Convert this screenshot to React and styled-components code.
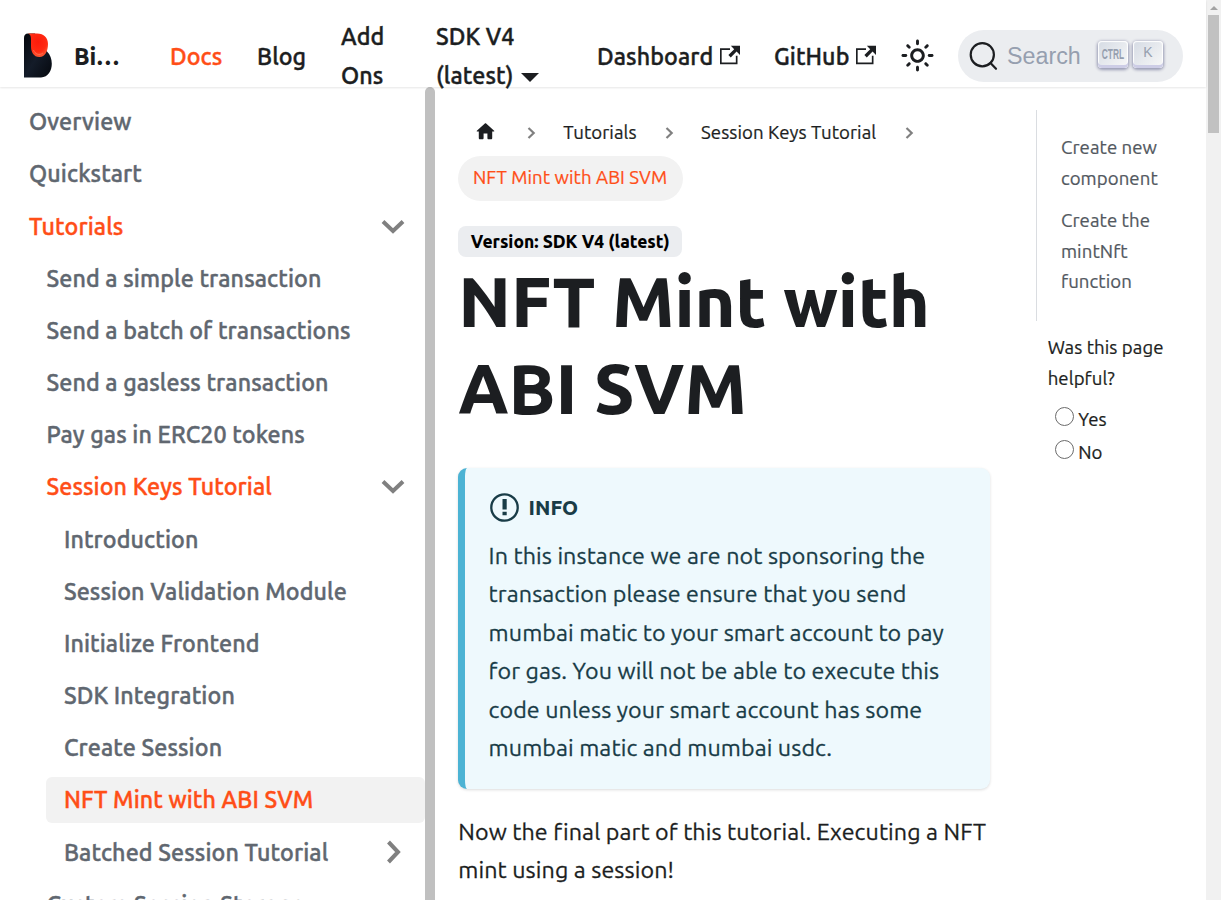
import React from 'react';
import styled, { createGlobalStyle } from 'styled-components';

const Global = createGlobalStyle`
  *, *::before, *::after { box-sizing: border-box; }
  body {
    margin: 0;
    background: #fff;
    color: #1c1e21;
    font-family: Ubuntu, "Noto Sans", "Open Sans", sans-serif;
    font-weight: 400;
    text-rendering: optimizeLegibility;
    overflow: hidden;
  }
`;

const Window = styled.div`
  display: flex;
  width: 1221px;
  height: 900px;
  overflow: hidden;
`;
const Page = styled.div`
  display: flex;
  flex-direction: column;
  width: 1206px;
`;
/* Ubuntu's regular and medium faces are thin: a hairline stroke gives them body. */
const Label = styled.span`
  white-space: nowrap;
  letter-spacing: ${(p) => (p.$bold ? '-0.001em' : '0.0038em')};
  -webkit-text-stroke: ${(p) => (p.$bold ? '0' : '0.012em')};
`;
const Line = styled(Label)`
  display: block;
`;

/* Navbar */
const Navbar = styled.header`
  display: flex;
  align-items: center;
  flex: none;
  height: 87px;
  padding: 25px 23px 0;
  position: relative;
  z-index: 2;
  box-shadow: 0 1px 2px rgba(0, 0, 0, 0.1);
  font-size: 23.27px;
  font-weight: 500;
  line-height: 39px;
`;
const Brand = styled.div`
  display: flex;
  align-items: center;
  gap: 21px;
  width: 147px;
  font-weight: 800;
`;
const NavLink = styled.a`
  display: flex;
  align-items: center;
  flex: none;
  gap: 6.6px;
  width: ${(p) => p.$w}px;
  color: ${(p) => (p.$active ? '#ff4e17' : '#1c1e21')};
`;
const NavLabel = styled(Label)`
  -webkit-text-stroke-width: 0.018em;
`;
const Caret = styled.i`
  display: inline-block;
  margin-left: 7.5px;
  border: 9px solid transparent;
  border-top: 9px solid #1c1e21;
  border-bottom: 0;
  vertical-align: 2px;
`;
const ThemeButton = styled.div`
  display: flex;
  width: 58px;
  margin-top: -2px;
`;
const Search = styled.div`
  display: flex;
  align-items: center;
  width: 225px;
  height: 52px;
  flex: none;
  padding: 0 0 0 11px;
  border-radius: 26px;
  background: #ebedf0;
  color: #969faf;
  font: 400 23.27px/50px "Liberation Sans", sans-serif;
`;
const SearchText = styled.span`
  width: 99.5px;
  flex: none;
  padding-left: 9px;
`;
const Keys = styled.div`
  display: flex;
  margin-top: -3px;
`;
const Key = styled.kbd`
  display: flex;
  justify-content: center;
  flex: none;
  width: 30px;
  height: 27px;
  margin: 0 5.5px 0 0;
  border-radius: 4px;
  background: linear-gradient(-225deg, #d5dbe4, #f8f8f8);
  box-shadow: inset 0 -3px 0 0 #cdcde6, inset 0 0 1px 1px #fff, 0 1px 3px 1px rgba(30, 35, 90, 0.4);
  font: 14px/23px "Liberation Sans", sans-serif;
`;

/* Sidebar */
const Columns = styled.div`
  display: flex;
  flex: 1;
  min-height: 0;
`;
const Sidebar = styled.nav`
  display: flex;
  width: 435px;
  flex: none;
  overflow: hidden;
`;
const Menu = styled.div`
  flex: 1;
  padding-top: 11.73px;
`;
const SidebarScroll = styled.div`
  width: 10px;
  border-radius: 5px 5px 0 0;
  background: #c0c0c0;
`;
const MenuItem = styled.a`
  display: flex;
  align-items: center;
  justify-content: space-between;
  height: 46px;
  margin: 0 0 6.185px ${(p) => 11.5 + p.$level * 17.45}px;
  padding: 0 19px 1px 17.5px;
  border-radius: 6px;
  background: ${(p) => (p.$current ? '#f2f2f2' : 'transparent')};
  color: ${(p) => (p.$active ? '#ff4e17' : '#606770')};
  font-size: 23.27px;
  font-weight: 500;
`;
const MenuLabel = styled(NavLabel)`
  letter-spacing: 0.005em;
`;

/* Article */
const Article = styled.main`
  width: 532px;
  flex: none;
  margin: 23px 0 0 23.3px;
`;
const Crumbs = styled.div`
  display: flex;
  align-items: center;
  height: 45px;
  padding-bottom: 1px;
  font-size: 18.62px;
`;
const Home = styled.div`
  display: flex;
  width: 62px;
  margin-top: -1px;
  padding-left: 16px;
`;
const Sep = styled.div`
  display: flex;
  width: ${(p) => p.$w}px;
  margin-top: 2px;
  padding-left: ${(p) => p.$pl}px;
`;
const Crumb = styled.a`
  width: ${(p) => p.$w}px;
`;
const Pill = styled.div`
  width: 225px;
  height: 45px;
  margin-top: 1px;
  padding-left: 14.7px;
  border-radius: 23px;
  background: #f2f2f2;
  color: #ff4e17;
  font-size: 18.62px;
  line-height: 43px;
`;
const Badge = styled.div`
  width: 224px;
  height: 31px;
  margin-top: 25px;
  padding-left: 12.5px;
  border-radius: 8px;
  background: #ebedf0;
  color: #000;
  font-size: 17.45px;
  font-weight: 800;
  line-height: 31px;
`;
const Title = styled.h1`
  margin: 1px 0 36px;
  font-size: 69.8px;
  font-weight: 800;
  line-height: 87px;
`;
const Alert = styled.section`
  height: 321px;
  padding: 20px 23.3px;
  border-left: 7px solid #4cb3d4;
  border-radius: 9px;
  background: #eef9fd;
  box-shadow: 0 1px 3px rgba(0, 0, 0, 0.14);
  color: #193c47;
  font-size: 23.27px;
  line-height: 38.4px;
`;
const AlertHead = styled.div`
  display: flex;
  align-items: center;
  gap: 9px;
  height: 38px;
  margin-bottom: 9.9px;
  font-size: 20.36px;
  font-weight: 800;
`;
const AlertLabel = styled(Label)`
  margin-top: 2px;
`;
const Paragraph = styled.p`
  margin: 23px 0 0;
  font-size: 23.27px;
  line-height: 38.4px;
`;

/* Right column */
const Aside = styled.aside`
  margin: 23px 0 0 45.7px;
  font-size: 18.62px;
  line-height: 30.7px;
`;
const Toc = styled.div`
  height: 211px;
  padding: 22.9px 0 0 24px;
  border-left: 1px solid #dadde1;
  color: #525860;
`;
const TocLink = styled.a`
  display: block;
  margin-bottom: 11.6px;
`;
const Feedback = styled.div`
  padding: 12px 0 0 11.7px;
`;
const Options = styled.div`
  margin-top: 8px;
`;
const Option = styled.label`
  display: flex;
  align-items: center;
  gap: 4.5px;
  height: 33px;
  margin-left: 7px;
  padding-top: 2px;
`;
const Radio = styled.i`
  width: 19px;
  height: 19px;
  margin-top: -7px;
  border: 1px solid #6b6b6b;
  border-radius: 50%;
`;

/* Window scrollbar */
const Track = styled.div`
  display: flex;
  flex-direction: column;
  align-items: center;
  width: 15px;
  background: #f1f1f1;
`;
const ArrowUp = styled.i`
  margin: 6px 0 5px;
  border: 4px solid transparent;
  border-top: 0;
  border-bottom-color: #a3a3a3;
`;
const Thumb = styled.div`
  width: 11px;
  height: 118px;
  background: #c1c1c1;
`;

const Logo = () => (
  <svg width="30" height="46" viewBox="0 0 30 46">
    <defs>
      <linearGradient id="ink" x1="0" y1="0" x2="1" y2="1">
        <stop offset="0" stopColor="#04070c" />
        <stop offset=".5" stopColor="#141c29" />
        <stop offset="1" stopColor="#05080e" />
      </linearGradient>
      <radialGradient id="flame" cx=".5" cy=".35" r=".65">
        <stop offset="0" stopColor="#fb1b0b" />
        <stop offset=".65" stopColor="#ff2a12" />
        <stop offset="1" stopColor="#ff5a35" />
      </radialGradient>
    </defs>
    <path d="M1 5Q1 0.5 5 0.5H12L24 18.5C32 26 30 44 18 44.5H1Z" fill="url(#ink)" />
    <path d="M5 0.5H14C21 0.5 25 5 25 11C25 18 22 24 16.5 24C10.500 24 8 19 8 13V6C8 3 7 1 5 0.5Z" fill="url(#flame)" />
    <path d="M10.5 17C12 21 16 23 20 20" fill="none" stroke="#ff8060" strokeWidth="1" opacity=".7" />
  </svg>
);
const ExternalSvg = styled.svg`
  margin-top: -3px;
`;
const External = () => (
  <ExternalSvg width="20" height="20" viewBox="0 0 24 24" fill="#1c1e21">
    <path d="M21 13v10h-21v-19h12v2h-10v15h17v-8h2zm3-12h-10.988l4.035 4-6.977 7.07 2.828 2.828 6.977-7.07 4.125 4.172v-11z" />
  </ExternalSvg>
);
const Sun = () => (
  <svg width="35" height="35" viewBox="0 0 24 24" fill="#1c1e21">
    <path d="M12,9c1.65,0,3,1.35,3,3s-1.35,3-3,3s-3-1.35-3-3S10.35,9,12,9 M12,7c-2.76,0-5,2.24-5,5s2.24,5,5,5s5-2.24,5-5 S14.76,7,12,7L12,7z M2,13l2,0c0.55,0,1-0.45,1-1s-0.45-1-1-1l-2,0c-0.55,0-1,0.45-1,1S1.45,13,2,13z M20,13l2,0c0.55,0,1-0.45,1-1 s-0.45-1-1-1l-2,0c-0.55,0-1,0.45-1,1S19.45,13,20,13z M11,2v2c0,0.55,0.45,1,1,1s1-0.45,1-1V2c0-0.55-0.45-1-1-1S11,1.45,11,2z M11,20v2c0,0.55,0.45,1,1,1s1-0.45,1-1v-2c0-0.55-0.45-1-1-1C11.45,19,11,19.45,11,20z M5.99,4.58c-0.39-0.39-1.03-0.39-1.41,0 c-0.39,0.39-0.39,1.03,0,1.41l1.06,1.06c0.39,0.39,1.03,0.39,1.41,0s0.39-1.03,0-1.41L5.99,4.58z M18.36,16.95 c-0.39-0.39-1.03-0.39-1.41,0c-0.39,0.39-0.39,1.03,0,1.41l1.06,1.06c0.39,0.39,1.03,0.39,1.41,0c0.39-0.39,0.39-1.03,0-1.41 L18.36,16.95z M19.42,5.99c0.39-0.39,0.39-1.03,0-1.41c-0.39-0.39-1.03-0.39-1.41,0l-1.06,1.06c-0.39,0.39-0.39,1.03,0,1.41 s1.03,0.39,1.41,0L19.42,5.99z M7.05,18.36c0.39-0.39,0.39-1.03,0-1.41c-0.39-0.39-1.03-0.39-1.41,0l-1.06,1.06 c-0.39,0.39-0.39,1.03,0,1.41s1.03,0.39,1.41,0L7.05,18.36z" />
  </svg>
);
const MagnifierSvg = styled.svg`
  flex: none;
`;
const Magnifier = () => (
  <MagnifierSvg width="29" height="29" viewBox="0 0 29 29" fill="none" stroke="#1c1e21" strokeWidth="2.2" strokeLinecap="round">
    <circle cx="13.3" cy="12.7" r="11.6" />
    <path d="M21.5 21L27 26.8" />
  </MagnifierSvg>
);
const CtrlKey = () => (
  <svg width="24" height="23" viewBox="0 0 24 23">
    <text transform="translate(0.8 17.5) scale(.54 1)" fontFamily="Liberation Sans" fontWeight="700" fontSize="15.5" fill="#969faf">CTRL</text>
  </svg>
);
const Chevron = ({ right }) => (
  <svg width="26" height="26" viewBox="0 0 26 26" fill="none" stroke="#808080" strokeWidth="4">
    <path d={right ? 'M8.5 3L18 13L8.5 23' : 'M3 8.5L13 18L23 8.5'} />
  </svg>
);
const SmallChevron = () => (
  <svg width="9" height="14" viewBox="0 0 9 14" fill="none" stroke="#808080" strokeWidth="2.2">
    <path d="M1.5 2L6.7 7L1.5 12" />
  </svg>
);
const HomeIcon = () => (
  <svg width="23" height="23" viewBox="0 0 24 24" fill="#1c1e21">
    <path d="M10 19v-5h4v5c0 .55.45 1 1 1h3c.55 0 1-.45 1-1v-7h1.7c.46 0 .68-.57.33-.87L12.67 3.6c-.38-.34-.96-.34-1.34 0l-8.36 7.53c-.34.3-.13.87.33.87H5v7c0 .55.45 1 1 1h3c.55 0 1-.45 1-1z" />
  </svg>
);
const InfoIcon = () => (
  <svg width="31" height="31" viewBox="0 0 31 31" fill="#193c47">
    <circle cx="15.5" cy="15.5" r="13.2" fill="none" stroke="#193c47" strokeWidth="2.3" />
    <path d="M13.5 7H17.7V17.5H13.5ZM13.5 19.7H17.7V23.3H13.5Z" />
  </svg>
);

const menu = [
  ['Overview', 0],
  ['Quickstart', 0],
  ['Tutorials', 0, 'open'],
  ['Send a simple transaction', 1],
  ['Send a batch of transactions', 1],
  ['Send a gasless transaction', 1],
  ['Pay gas in ERC20 tokens', 1],
  ['Session Keys Tutorial', 1, 'open'],
  ['Introduction', 2],
  ['Session Validation Module', 2],
  ['Initialize Frontend', 2],
  ['SDK Integration', 2],
  ['Create Session', 2],
  ['NFT Mint with ABI SVM', 2, 'current'],
  ['Batched Session Tutorial', 2, 'closed'],
  ['Custom Session Storage', 1],
];

const info = [
  'In this instance we are not sponsoring the',
  'transaction please ensure that you send',
  'mumbai matic to your smart account to pay',
  'for gas. You will not be able to execute this',
  'code unless your smart account has some',
  'mumbai matic and mumbai usdc.',
];

export default function App() {
  return (
    <Window>
      <Global />
      <Page>
        <Navbar>
          <Brand><Logo /><Label $bold>Bi…</Label></Brand>
          <NavLink $w={87} $active><NavLabel>Docs</NavLabel></NavLink>
          <NavLink $w={84}><NavLabel>Blog</NavLabel></NavLink>
          <NavLink $w={95}><NavLabel>Add<br />Ons</NavLabel></NavLink>
          <NavLink $w={161}><NavLabel>SDK V4<br />(latest)<Caret /></NavLabel></NavLink>
          <NavLink $w={177}><NavLabel>Dashboard</NavLabel><External /></NavLink>
          <NavLink $w={126}><NavLabel>GitHub</NavLabel><External /></NavLink>
          <ThemeButton><Sun /></ThemeButton>
          <Search>
            <Magnifier />
            <SearchText>Search</SearchText>
            <Keys>
              <Key><CtrlKey /></Key>
              <Key>K</Key>
            </Keys>
          </Search>
        </Navbar>
        <Columns>
          <Sidebar>
            <Menu>
              {menu.map(([text, level, state]) => (
                <MenuItem key={text} $level={level} $current={state === 'current'} $active={state === 'open' || state === 'current'}>
                  <MenuLabel>{text}</MenuLabel>
                  {(state === 'open' || state === 'closed') && <Chevron right={state === 'closed'} />}
                </MenuItem>
              ))}
            </Menu>
            <SidebarScroll />
          </Sidebar>
          <Article>
            <Crumbs>
              <Home><HomeIcon /></Home>
              <Sep $w={43} $pl={6.5}><SmallChevron /></Sep>
              <Crumb $w={102}><Label>Tutorials</Label></Crumb>
              <Sep $w={35.7} $pl={0}><SmallChevron /></Sep>
              <Crumb $w={204}><Label>Session Keys Tutorial</Label></Crumb>
              <Sep $w={9} $pl={0}><SmallChevron /></Sep>
            </Crumbs>
            <Pill><Label>NFT Mint with ABI SVM</Label></Pill>
            <Badge><Label $bold>Version: SDK V4 (latest)</Label></Badge>
            <Title><Line $bold>NFT Mint with</Line><Line $bold>ABI SVM</Line></Title>
            <Alert>
              <AlertHead><InfoIcon /><AlertLabel $bold>INFO</AlertLabel></AlertHead>
              {info.map((t) => <Line key={t}>{t}</Line>)}
            </Alert>
            <Paragraph>
              <Line>Now the final part of this tutorial. Executing a NFT</Line>
              <Line>mint using a session!</Line>
            </Paragraph>
          </Article>
          <Aside>
            <Toc>
              <TocLink><Line>Create new</Line><Line>component</Line></TocLink>
              <TocLink><Line>Create the</Line><Line>mintNft</Line><Line>function</Line></TocLink>
            </Toc>
            <Feedback>
              <Line>Was this page</Line>
              <Line>helpful?</Line>
              <Options>
                <Option><Radio /><Label>Yes</Label></Option>
                <Option><Radio /><Label>No</Label></Option>
              </Options>
            </Feedback>
          </Aside>
        </Columns>
      </Page>
      <Track><ArrowUp /><Thumb /></Track>
    </Window>
  );
}
